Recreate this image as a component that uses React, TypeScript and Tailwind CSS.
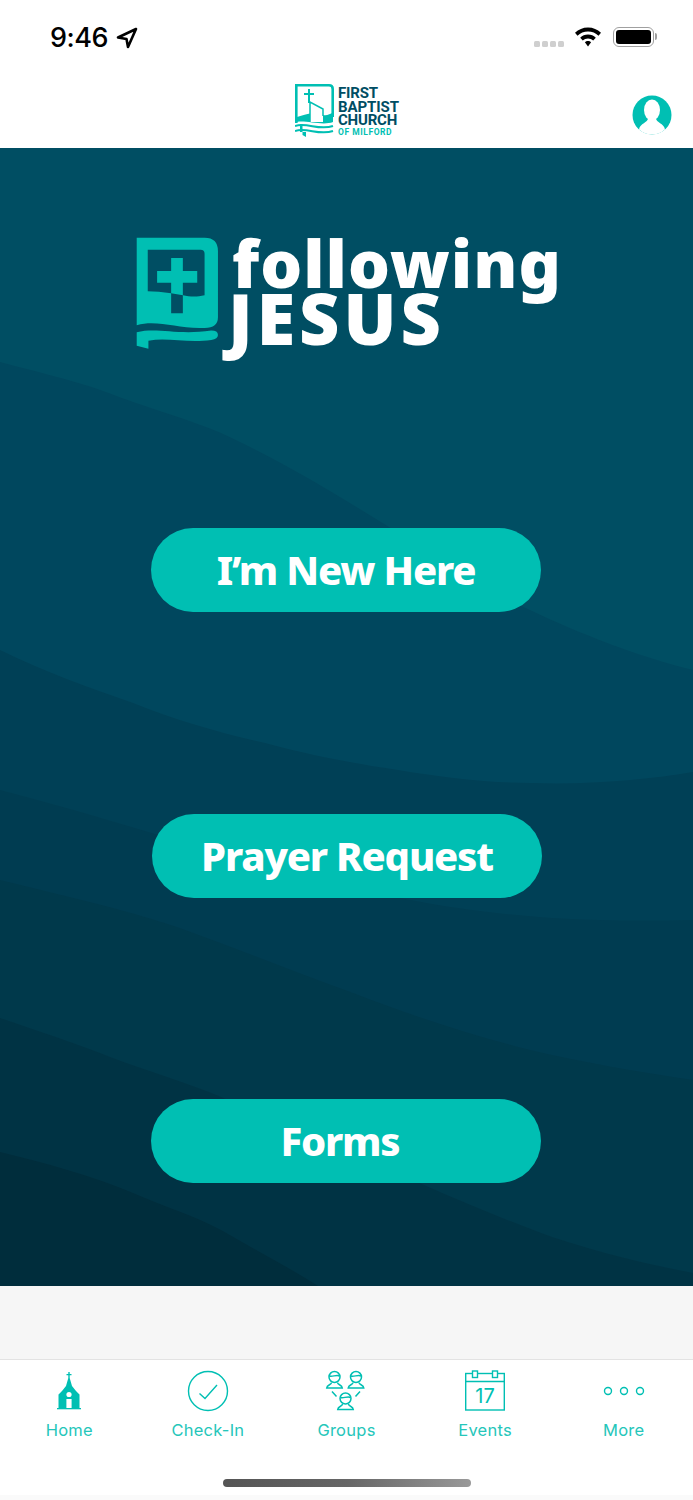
const TEAL = "#00bfb3";

function Waves() {
  return (
    <svg className="absolute inset-0 h-full w-full" viewBox="0 148 693 1138" preserveAspectRatio="none">
      <rect x="0" y="148" width="693" height="1138" fill="#004e63" />
      <path d="M0 362C45 374 85 383 119 397C155 410 190 420 221 433C290 465 340 497 389 527C435 560 485 590 530 610C580 634 640 657 693 670V1286H0Z" fill="#00475e" />
      <path d="M0 650C45 672 90 688 133 703C175 720 220 733 265 743C310 755 350 763 398 770C445 778 490 783 530 783C590 785 645 780 693 772V1286H0Z" fill="#004056" />
      <path d="M0 790C70 808 140 830 210 850C280 872 345 888 411 900C460 910 510 915 552 918C600 921 650 921 693 920V1286H0Z" fill="#003c51" />
      <path d="M0 880C60 895 120 908 177 927C235 948 295 972 353 993C410 1015 470 1035 530 1050C585 1063 640 1072 693 1080V1286H0Z" fill="#00394b" />
      <path d="M0 1018C35 1030 75 1043 110 1057C150 1072 185 1082 221 1097C290 1128 355 1155 424 1185C465 1203 510 1222 552 1237C600 1253 650 1265 693 1273V1286H0Z" fill="#003344" />
      <path d="M0 1152C45 1163 90 1175 133 1193C165 1207 195 1216 221 1230C255 1250 290 1268 318 1286H0Z" fill="#002d3c" />
    </svg>
  );
}

function BookLogo() {
  return (
    <svg width="83" height="113" viewBox="45 50 248 338" className="mt-[5px] shrink-0">
      <path
        fillRule="evenodd"
        fill={TEAL}
        d="M47 52H250Q290 52 290 92V290Q290 322 250 322C170 326 110 296 47 314ZM80 88V212C100 212 125 214 150 218V278H185V224C205 228 225 230 250 224V100Q250 88 238 88Z"
      />
      <path fill={TEAL} d="M150 113H185V152H228V187H185V224L150 218V187H108V152H150Z" />
      <path fill={TEAL} d="M47 335C110 320 170 345 270 330Q290 330 290 343Q290 355 270 358C200 368 140 350 82 360V384L47 375Z" />
    </svg>
  );
}

function ChurchLogo() {
  return (
    <div className="flex items-start gap-[4px]">
      <svg width="39" height="54" viewBox="0 0 39 54" className="mt-[4px]">
        <path fill="none" stroke={TEAL} strokeWidth="2.600" d="M1.300 39V1.300H34Q37.700 1.300 37.700 5V33" />
        <path fill={TEAL} d="M2 33C8 31 12 30 15 29.500V38H28V31C32 32 35 30 38 28.500V38C28 42 10 36 2 38Z" />
        <path fill="none" stroke={TEAL} strokeWidth="1.500" d="M15 38V18L28 25V32" />
        <path fill={TEAL} d="M13 5H15V9H19V11H15V19H13V11H9V9H13Z" />
        <path fill="none" stroke={TEAL} strokeWidth="2" d="M0 42C12 38 24 47 38 42M0 47C12 43 24 52 38 47" />
        <path fill={TEAL} d="M5 40H7.500V48H11V53L7.500 51V48H5Z" />
      </svg>
      <div className="mt-[7px] flex w-[61px] flex-col font-['Roboto',sans-serif] font-bold text-[#004d63]">
        <span className="h-[13.5px] text-[15px] leading-[13.5px] tracking-[-0.2px]">FIRST</span>
        <span className="h-[13.5px] text-[15px] leading-[13.5px] tracking-[-0.1px]">BAPTIST</span>
        <span className="h-[13.5px] text-[15px] leading-[13.5px] tracking-[-0.2px]">CHURCH</span>
        <span className="text-[8.5px] leading-[9px] tracking-[0.55px] text-[#00bfb3]">OF MILFORD</span>
      </div>
    </div>
  );
}

function PillButton({ label, className }: { label: string; className?: string }) {
  return (
    <button className={`flex h-[84px] w-[390px] items-center justify-center rounded-full bg-[#00bfb3] font-['Noto_Sans',sans-serif] text-[40px] font-extrabold tracking-[-1.2px] text-white ${className ?? ""}`}>
      {label}
    </button>
  );
}

function StatusBar() {
  return (
    <div className="flex h-[72px] items-start justify-between pl-[50px] pr-[36px] pt-[20px]">
      <div className="flex items-center gap-[8px]">
        <span className="font-['Inter',sans-serif] text-[27px] font-medium leading-[36px] tracking-[-0.5px] text-black">9:46</span>
        <svg width="22" height="22" viewBox="0 0 22 22">
          <path fill="none" stroke="#000" strokeWidth="2.600" strokeLinejoin="round" d="M20 2L2 10.500L10.500 12L12 20Z" />
        </svg>
      </div>
      <div className="flex items-center gap-[10px] pt-[6px]">
        <div className="mt-[15px] flex gap-[2px] self-start">
          {[0, 1, 2, 3].map((i) => (
            <span key={i} className="h-[6px] w-[6px] rounded-[1.5px] bg-[#cfcfcf]" />
          ))}
        </div>
        <svg width="28" height="21" viewBox="0 0 28 21">
          <path d="M14 1.500C8.800 1.500 4.600 3.500 1 6.800L3.500 9.800C6.300 7.100 9.900 5.600 14 5.600S21.700 7.100 24.500 9.800L27 6.800C23.400 3.500 19.200 1.500 14 1.500Z" />
          <path d="M14 8.500C11 8.500 8.300 9.700 6.200 11.700L8.800 14.600C10.200 13.200 12 12.500 14 12.500S17.800 13.200 19.200 14.600L21.800 11.700C19.700 9.700 17 8.500 14 8.500Z" />
          <path d="M14 15C12.800 15 11.700 15.500 10.900 16.300L14 20.500L17.100 16.300C16.300 15.500 15.200 15 14 15Z" />
        </svg>
        <div className="ml-[1px] flex items-center">
          <div className="flex h-[20px] w-[41px] items-center rounded-[6px] border-[1.5px] border-[#a0a0a0] p-[2px]">
            <div className="h-full w-full rounded-[3px] bg-black" />
          </div>
          <div className="ml-[1px] h-[7px] w-[2px] rounded-r-[2px] bg-[#a0a0a0]" />
        </div>
      </div>
    </div>
  );
}

function HomeIcon() {
  return (
    <svg width="24" height="38" viewBox="0 0 24 38">
      <path fill={TEAL} d="M11.300 0H12.700V2H14.500V3.300H12.700V6L15 14L19 19L22.500 22.500V36H14.600V27H9.400V36H1.500V22.500L5 19L9 14L11.300 6V3.300H9.500V2H11.300Z" />
      <path fill="#fff" d="M10.300 27.500H13.700V36H12.600V28.500H11.400V36H10.300Z" />
      <circle cx="12" cy="22.500" r="2.600" fill="#fff" />
      <rect x="0" y="36" width="24" height="1.300" fill={TEAL} />
    </svg>
  );
}

function CheckIcon() {
  return (
    <svg width="42" height="42" viewBox="0 0 42 42" fill="none" stroke={TEAL} strokeWidth="1.400">
      <circle cx="21" cy="21" r="19.500" />
      <path d="M12.500 23.500L18 28.500L30 15" />
    </svg>
  );
}

function Person({ x, y }: { x: number; y: number }) {
  return (
    <g transform={`translate(${x} ${y})`} fill="none" stroke={TEAL} strokeWidth="1.500">
      <circle cx="8.500" cy="6" r="5.500" />
      <path d="M3.500 5C6 6 11 3.500 13.500 5" />
      <path d="M5.500 11.500C5.500 14 1 13.500 0.700 17H16.300C16 13.500 11.500 14 11.500 11.500" />
    </g>
  );
}

function GroupsIcon() {
  return (
    <svg width="42" height="42" viewBox="0 0 42 42" fill="none" stroke={TEAL} strokeWidth="1.500">
      <Person x={1} y={1} />
      <Person x={22.500} y={1} />
      <Person x={12} y={22.500} />
      <path d="M7 21.500L11.500 26.500M35 21.500L30.500 26.500" />
    </svg>
  );
}

function EventsIcon() {
  return (
    <svg width="42" height="42" viewBox="0 0 42 42" fill="none" stroke={TEAL} strokeWidth="1.400">
      <rect x="1.700" y="3.500" width="38.600" height="36.500" />
      <path d="M1.700 11.500H40.300" />
      <rect x="8.500" y="1" width="5" height="6.500" fill="#fff" />
      <rect x="28.500" y="1" width="5" height="6.500" fill="#fff" />
      <text x="21" y="33" textAnchor="middle" fontFamily="Inter, sans-serif" fontSize="20" fontWeight="400" fill={TEAL} stroke="none">17</text>
    </svg>
  );
}

function MoreIcon() {
  return (
    <svg width="42" height="42" viewBox="0 0 42 42" fill="none" stroke={TEAL} strokeWidth="1.400">
      <circle cx="5" cy="21" r="3.500" />
      <circle cx="21" cy="21" r="3.500" />
      <circle cx="37" cy="21" r="3.500" />
    </svg>
  );
}

const tabs = [
  { label: "Home", icon: <HomeIcon /> },
  { label: "Check-In", icon: <CheckIcon /> },
  { label: "Groups", icon: <GroupsIcon /> },
  { label: "Events", icon: <EventsIcon /> },
  { label: "More", icon: <MoreIcon /> },
];

export default function App() {
  return (
    <div className="flex h-[1500px] w-[693px] flex-col overflow-hidden bg-white">
      <StatusBar />
      <header className="relative flex h-[76px] justify-center pl-[1px] pt-[8px]">
        <ChurchLogo />
        <svg className="absolute right-[21px] top-[23px]" width="40" height="40" viewBox="0 0 40 40">
          <circle cx="20" cy="20" r="19.500" fill={TEAL} />
          <ellipse cx="20" cy="15" rx="8" ry="10.500" fill="#fff" />
          <path fill="#fff" d="M16 23C16 28 8 28 7 34.500A19.500 19.500 0 0 0 33 34.500C32 28 24 28 24 23Z" />
        </svg>
      </header>
      <main className="relative h-[1138px] shrink-0">
        <Waves />
        <div className="relative flex flex-col items-center pr-[1px] pt-[84px]">
          <div className="flex h-[130px] gap-[13px] self-start pl-[136px]">
            <BookLogo />
            <div className="flex flex-col font-['Noto_Sans',sans-serif] font-black text-white">
              <span className="h-[60px] text-[66px] leading-[60px] tracking-[1px]">following</span>
              <span className="-ml-[4px] -mt-[9px] h-[70px] text-[70px] leading-[70px] tracking-[4px]">JESUS</span>
            </div>
          </div>
          <PillButton label="I’m New Here" className="mt-[166px]" />
          <PillButton label="Prayer Request" className="ml-[2px] mt-[202px]" />
          <PillButton label="Forms" className="mt-[201px] pr-[12px]" />
        </div>
      </main>
      <div className="h-[74px] shrink-0 border-b border-[#e3e3e3] bg-[#f6f6f6]" />
      <nav className="flex flex-1 flex-col">
        <div className="grid grid-cols-5 pt-[10px]">
          {tabs.map((t) => (
            <div key={t.label} className="flex flex-col items-center">
              <div className="flex h-[42px] items-center justify-center">{t.icon}</div>
              <span className="mt-[7px] font-['Inter',sans-serif] text-[16.5px] leading-[22px] tracking-[0.25px] text-[#25c6ba]">
                {t.label}
              </span>
            </div>
          ))}
        </div>
        <div className="mt-[38px] flex justify-center">
          <div className="h-[8px] w-[248px] rounded-full bg-gradient-to-r from-[#555555] via-[#666666] to-[#999999]" />
        </div>
        <div className="mt-auto h-[5px] bg-[#fafafa]" />
      </nav>
    </div>
  );
}
